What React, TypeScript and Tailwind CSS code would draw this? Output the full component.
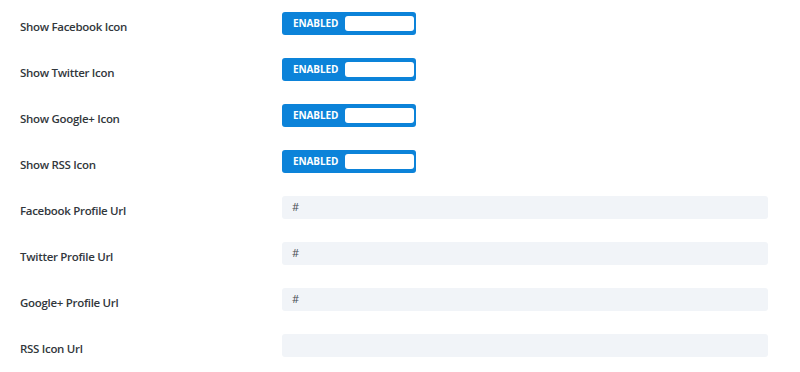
import React from 'react';

type Row =
  | { label: string; kind: 'toggle' }
  | { label: string; kind: 'input'; value: string };

const rows: Row[] = [
  { label: 'Show Facebook Icon', kind: 'toggle' },
  { label: 'Show Twitter Icon', kind: 'toggle' },
  { label: 'Show Google+ Icon', kind: 'toggle' },
  { label: 'Show RSS Icon', kind: 'toggle' },
  { label: 'Facebook Profile Url', kind: 'input', value: '#' },
  { label: 'Twitter Profile Url', kind: 'input', value: '#' },
  { label: 'Google+ Profile Url', kind: 'input', value: '#' },
  { label: 'RSS Icon Url', kind: 'input', value: '' },
];

const Toggle = () => (
  <div className="flex h-[23px] w-[134px] items-center justify-between rounded-[3px] bg-[#0c83d9] pl-[11px] pr-[2px]">
    <span className="text-[10px] font-bold uppercase tracking-[-0.1px] text-white">Enabled</span>
    <span className="h-[15px] w-[69px] rounded-[3px] bg-white" />
  </div>
);

const App: React.FC = () => {
  return (
    <div className="h-[372px] w-[800px] bg-white font-['Open_Sans',sans-serif]">
      {rows.map((row) => (
        <div key={row.label} className="flex h-[46px] items-start pl-5 pr-8">
          <div className="w-[262px] pt-[19px] text-[11.5px] font-semibold leading-4 tracking-[-0.3px] text-[#32373c]">
            {row.label}
          </div>
          <div className="mt-3 flex-1">
            {row.kind === 'toggle' ? (
              <Toggle />
            ) : (
              <div className="flex h-[23px] items-center rounded-[3px] bg-[#f1f4f8] px-[10px] text-[11px] font-medium text-[#4a4f55]">
                {row.value}
              </div>
            )}
          </div>
        </div>
      ))}
    </div>
  );
};

export default App;
